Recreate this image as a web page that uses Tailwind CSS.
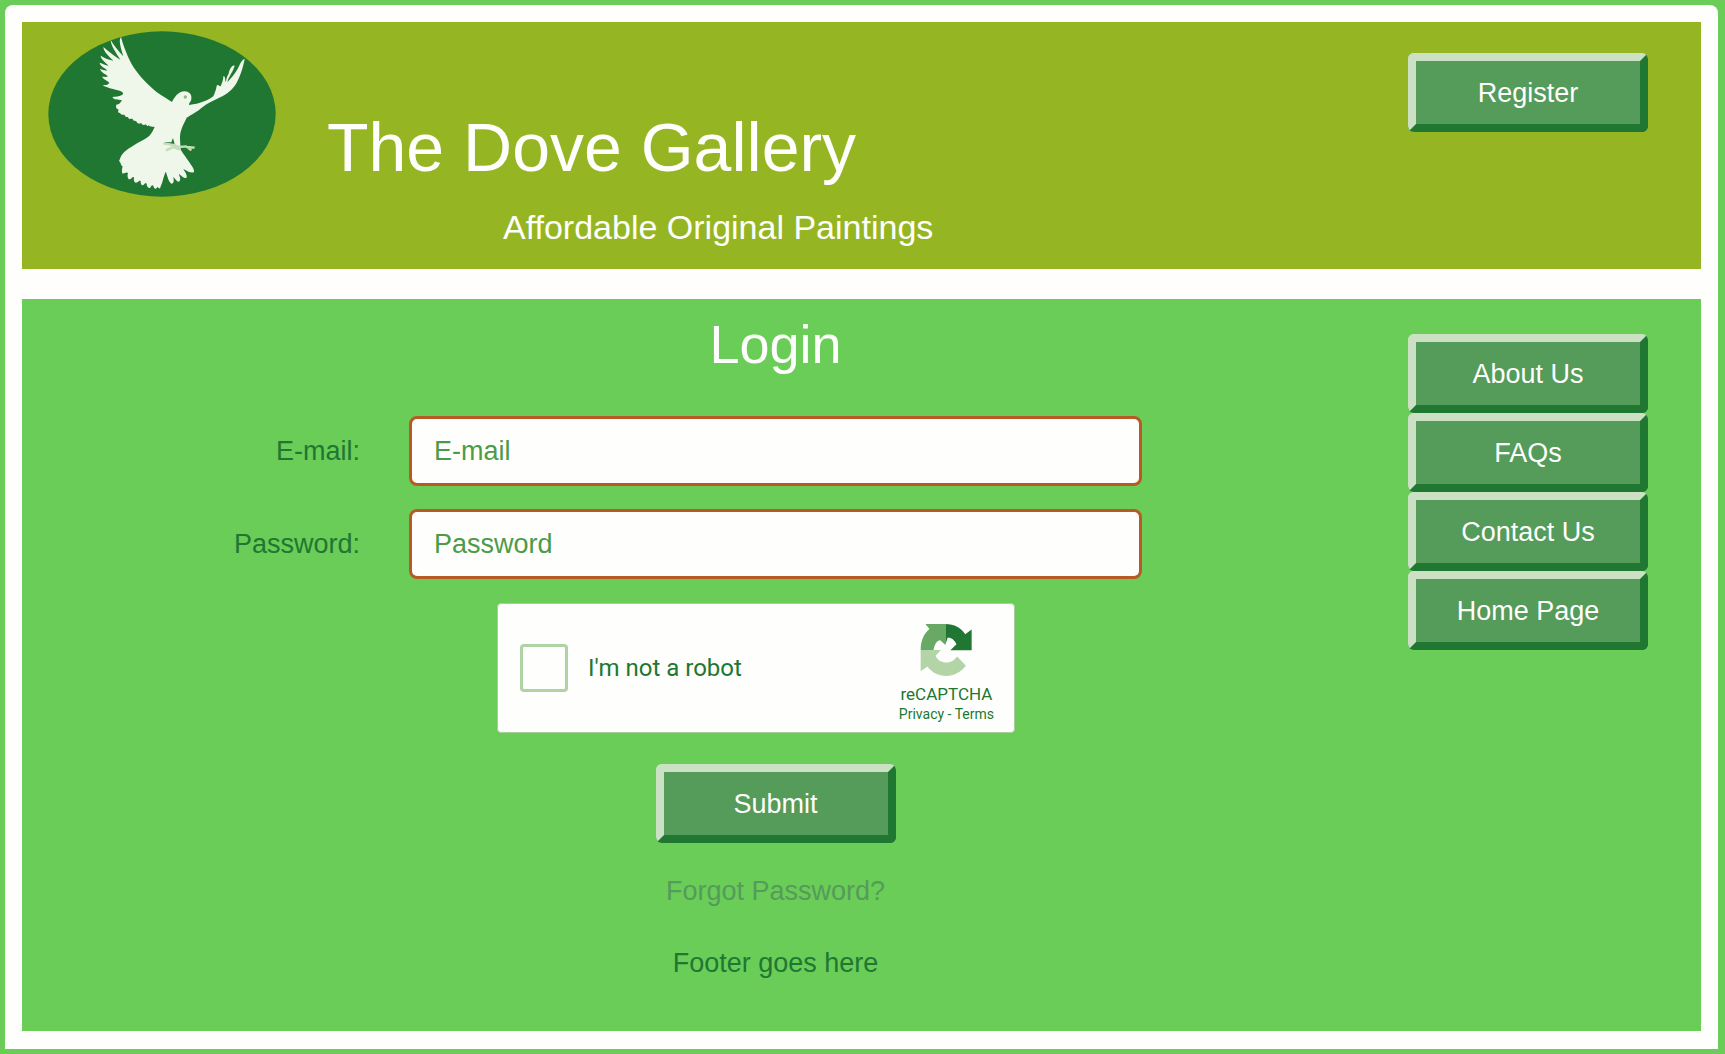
<!DOCTYPE html>
<html lang="en">
<head>
<meta charset="utf-8">
<title>The Dove Gallery - Login</title>
<script src="https://cdn.jsdelivr.net/npm/@tailwindcss/browser@4"></script>
</head>
<body class="flex min-h-screen flex-col bg-[#6acd58] pt-[5px] pr-[7px] pb-[5px] pl-[5px] font-['Liberation_Sans',Arial,sans-serif] text-[27px] leading-8 text-[#207732]">
<div class="flex grow flex-col gap-[30px] rounded-t-lg bg-[#fefefc] p-[17px] pb-[18px]">

  <header class="grid min-h-[247px] grid-cols-[305fr_1081fr_240fr_53fr] items-start bg-[#95b622] text-[#fefefc]">
    <svg class="mt-[9px] ml-[26px] h-[166px] w-[228px]" viewBox="-126 18 684 498" role="img" aria-label="White dove">
      <ellipse cx="216" cy="267" rx="341" ry="248" fill="#207732"/>
      <path fill="#eff6ea" d="M246 231 C220 214 200 204 180 184 C155 160 134 136 119 106 C109 84 98 56 93 36 C86 44 90 62 100 94 C84 76 70 60 62 45 C62 60 78 84 91 104 C68 90 52 76 40 66 C40 78 56 94 70 107 C54 104 42 98 32 92 C32 102 46 112 56 122 C46 120 38 116 29 113 C30 124 44 128 52 136 C46 138 38 134 30 132 C34 144 46 146 54 154 C48 157 42 155 36 155 C42 165 52 165 58 174 C52 182 46 180 38 180 C52 190 72 192 91 198 C100 202 102 206 96 210 C86 216 78 214 67 216 C72 226 84 222 96 226 C90 236 84 240 80 238 C76 246 78 252 86 254 C84 260 82 262 90 264 C94 272 100 268 104 270 C106 278 112 276 114 276 C116 286 124 280 128 282 C130 290 136 286 140 290 C144 298 148 296 154 294 C156 302 164 300 168 298 C170 306 176 302 180 304 C184 306 190 304 194 306 C184 328 178 336 158 346 C136 358 112 372 98 386 C90 396 90 404 87 408 C94 414 92 422 98 424 C96 432 94 442 98 446 C106 444 110 440 114 444 C110 456 116 464 118 463 C126 462 126 454 132 456 C130 466 134 474 138 473 C146 472 146 464 152 468 C152 480 156 482 160 480 C166 476 166 472 170 476 C170 486 176 490 180 489 C184 482 186 478 190 482 C192 492 198 494 202 486 C208 490 210 494 212 484 C218 472 222 450 227 440 C232 450 234 468 244 476 C252 476 252 468 250 456 C256 462 260 470 266 470 C274 466 270 456 266 446 C276 454 284 462 290 458 C292 448 284 440 280 432 C292 438 300 444 312 442 C314 432 304 422 298 412 C290 398 280 388 272 374 L270 342 C270 316 276 308 290 278 C306 268 320 262 338 246 C352 234 366 230 380 222 C406 210 420 202 436 180 C448 162 460 126 464 102 C456 102 450 118 444 130 C432 152 420 162 412 172 C414 158 430 138 434 122 C426 118 418 134 416 146 C410 154 410 164 406 172 C406 162 406 154 400 154 C400 166 396 174 392 184 C388 184 384 176 380 182 C378 196 374 204 370 214 C350 228 330 236 298 240 C294 236 304 230 304 222 C306 206 296 200 284 199 C264 200 254 216 246 231 Z"/>
      <circle cx="286" cy="216" r="5" fill="#8fbb85"/>
      <path fill="#207732" d="M222 352 L244 352 L249 339 L254 358 L266 368 L244 360 Z"/>
      <path d="M220 355L250 360L268 366L288 364L304 376M228 376L250 366L270 374M290 366L314 368" fill="none" stroke="#c5ddba" stroke-width="7"/>
    </svg>
    <div class="pt-[83px]">
      <h1 class="text-[68px] leading-[84px]">The Dove Gallery</h1>
      <p class="pt-[18px] pl-[176px] text-[34px] leading-10">Affordable Original Paintings</p>
    </div>
    <button type="button" class="mt-[31px] h-[79px] rounded-md border-8 border-t-[#cce1c3] border-r-[#207732] border-b-[#207732] border-l-[#cce1c3] bg-[#559b5a]">Register</button>
  </header>

  <main class="grid grow grid-cols-[387fr_733fr_266fr_240fr_53fr] items-start bg-[#6acd58]">
    <form class="col-span-3 grid grid-cols-[387fr_733fr_266fr] pt-[13px]">
      <h2 class="col-start-2 text-center text-[54px] leading-[64px] text-[#fefefc]">Login</h2>

      <label for="email" class="col-start-1 mt-10 self-center pr-[49px] text-right">E-mail:</label>
      <input id="email" type="email" placeholder="E-mail" class="mt-10 h-[70px] w-full rounded-lg border-3 border-[#b75a24] bg-[#fefefc] px-[22px] placeholder:text-[#4d9b49]">

      <label for="password" class="col-start-1 mt-[23px] self-center pr-[49px] text-right">Password:</label>
      <input id="password" type="password" placeholder="Password" class="mt-[23px] h-[70px] w-full rounded-lg border-3 border-[#b75a24] bg-[#fefefc] px-[22px] placeholder:text-[#4d9b49]">

      <div class="col-start-2 mt-[24px] ml-[88px] flex h-[130px] w-[518px] items-center rounded-sm border border-[#a5cf9a] bg-[#fefefc] pr-[20px] pl-[22px] font-[Roboto,sans-serif]">
        <input id="robot" type="checkbox" class="size-[48px] appearance-none rounded-sm border-3 border-[#b0d3a5] bg-[#fefefc]">
        <label for="robot" class="grow pl-[20px] text-[24px]">I'm not a robot</label>
        <div class="flex flex-col items-center pt-3">
          <svg class="h-[52px] w-[52px]" viewBox="0 0 154 154" aria-hidden="true">
            <path fill="#207732" d="M75 0C102 0 122 12 134 30L153 16V78H90L108 60C104 50 94 40 82 40L75 62Z"/>
            <path fill="#68a965" d="M75 0H16L28 15C10 30 2 52 2 77H40C42 62 50 48 60 48L75 62Z"/>
            <path fill="#b2d4a6" d="M2 77H62L46 94C52 108 64 114 78 114C94 114 102 106 110 96L136 124C118 146 98 154 78 154C54 154 36 144 22 126L2 140Z"/>
          </svg>
          <span class="pt-[8px] text-[17px] leading-5">reCAPTCHA</span>
          <span class="text-[14px] leading-5"><a href="#">Privacy</a> - <a href="#">Terms</a></span>
        </div>
      </div>

      <div class="col-start-2 flex flex-col items-center pt-[31px]">
        <button type="submit" class="h-[79px] w-[240px] rounded-md border-8 border-t-[#cce1c3] border-r-[#207732] border-b-[#207732] border-l-[#cce1c3] bg-[#559b5a] text-[#fefefc]">Submit</button>
        <a href="#" class="pt-[32px] text-[#559b5a]">Forgot Password?</a>
        <footer class="pt-10">Footer goes here</footer>
      </div>
    </form>

    <nav class="flex flex-col pt-[35px] text-[#fefefc]">
      <button type="button" class="h-[79px] rounded-md border-8 border-t-[#cce1c3] border-r-[#207732] border-b-[#207732] border-l-[#cce1c3] bg-[#559b5a]">About Us</button>
      <button type="button" class="h-[79px] rounded-md border-8 border-t-[#cce1c3] border-r-[#207732] border-b-[#207732] border-l-[#cce1c3] bg-[#559b5a]">FAQs</button>
      <button type="button" class="h-[79px] rounded-md border-8 border-t-[#cce1c3] border-r-[#207732] border-b-[#207732] border-l-[#cce1c3] bg-[#559b5a]">Contact Us</button>
      <button type="button" class="h-[79px] rounded-md border-8 border-t-[#cce1c3] border-r-[#207732] border-b-[#207732] border-l-[#cce1c3] bg-[#559b5a]">Home Page</button>
    </nav>
  </main>
</div>
</body>
</html>
